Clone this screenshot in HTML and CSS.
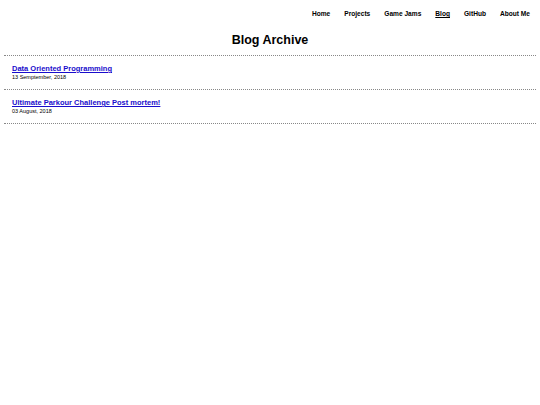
FILE: index.html
```html
<!DOCTYPE html>
<html>
<head>
<meta charset="utf-8">
<link rel="stylesheet" href="styles.css">
</head>
<body>
<nav class="nav">
  <a href="#">Home</a>
  <a href="#">Projects</a>
  <a href="#">Game Jams</a>
  <a href="#" class="active">Blog</a>
  <a href="#">GitHub</a>
  <a href="#">About Me</a>
</nav>
<h1 class="title">Blog Archive</h1>
<ul class="posts">
  <li class="post">
    <a href="#" class="post-title">Data Oriented Programming</a>
    <div class="post-date">13 Semptember, 2018</div>
  </li>
  <li class="post">
    <a href="#" class="post-title">Ultimate Parkour Challenge Post mortem!</a>
    <div class="post-date">03 August, 2018</div>
  </li>
</ul>
</body>
</html>
```

FILE: styles.css
```css
body {
  margin: 0;
  padding: 0 4px;
  font-family: "Liberation Sans", Arial, sans-serif;
  background: #fff;
  color: #000;
}
.nav {
  display: flex;
  justify-content: flex-end;
  gap: 14px;
  padding: 10px 6px 0 0;
  height: 12px;
}
.nav a {
  font-size: 6.6px;
  font-weight: bold;
  color: #000;
  text-decoration: none;
  line-height: 8px;
}
.nav a.active {
  text-decoration: underline;
}
.title {
  margin: 11px 0 0;
  text-align: center;
  font-size: 12.5px;
  font-weight: bold;
  line-height: 14px;
  height: 22px;
  border-bottom: 1px dotted #888;
}
.posts {
  list-style: none;
  margin: 0;
  padding: 0;
}
.post {
  padding: 8px 8px 0;
  height: 25px;
  border-bottom: 1px dotted #888;
}
.post-title {
  display: block;
  font-size: 7.5px;
  font-weight: bold;
  color: #1a0dcc;
  text-decoration: underline;
  line-height: 9px;
}
.post-date {
  font-size: 5.5px;
  line-height: 8px;
  color: #000;
}
```
